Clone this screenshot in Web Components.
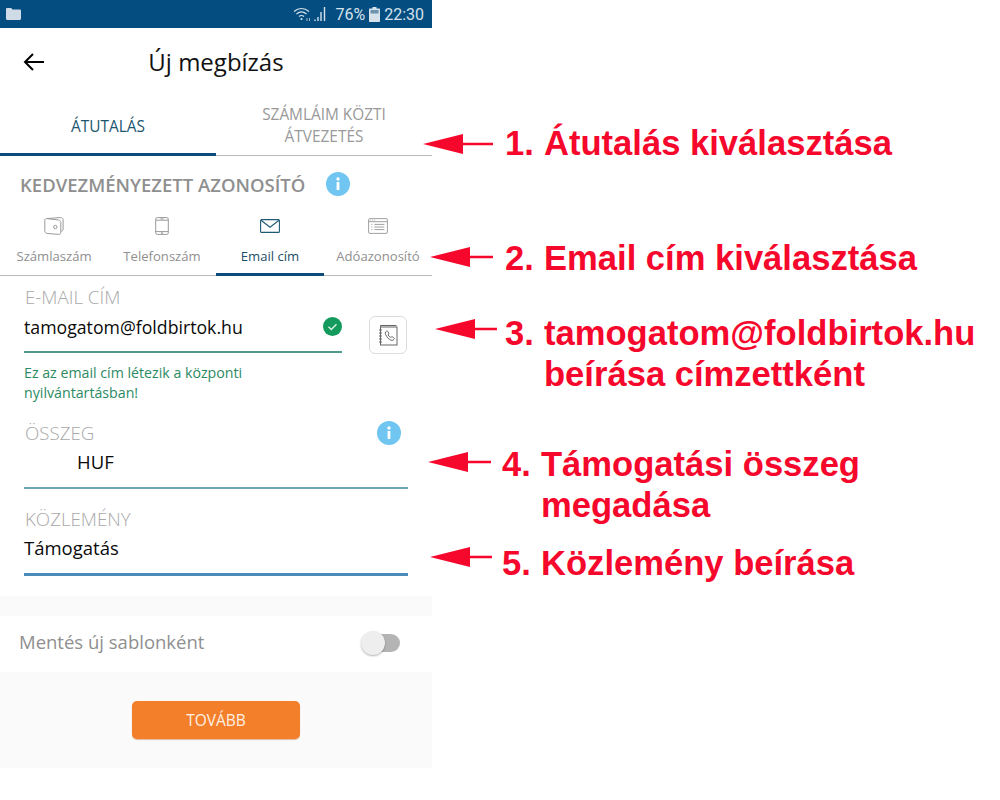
<!DOCTYPE html>
<html lang="hu">
<head>
<meta charset="utf-8">
<title>Új megbízás</title>
<style>
  html, body { margin: 0; background: #fff; }
  body { font-family: "Open Sans", "Liberation Sans", sans-serif; position: relative; height: 800px; overflow: hidden; }
</style>
</head>
<body>
<phone-screen>
  <status-bar></status-bar>
  <app-header title="Új megbízás"></app-header>
  <main-tabs></main-tabs>
  <section-title text="KEDVEZMÉNYEZETT AZONOSÍTÓ"></section-title>
  <id-tabs>
    <id-tab label="Számlaszám">
      <svg width="20" height="18" viewBox="0 0 20 18" fill="none" stroke="#9a9a9a" stroke-width="1"><path d="M3 1.5 16.5.6c1.3 0 2.6.8 2.6 2.2v9.4c0 1.2-.8 2-2 2.2"/><path d="M2.6 1.6 14.5 3c1.4.2 2.3 1.2 2.3 2.6v9.6c0 1.4-1 2.4-2.4 2.2L3 16.4c-1.2-.2-2.2-1.2-2.2-2.6V3.2c0-1 .8-1.7 1.8-1.6Z"/><circle cx="11.3" cy="10" r="1.7"/></svg>
    </id-tab>
    <id-tab label="Telefonszám">
      <svg width="14" height="18" viewBox="0 0 14 18" fill="none" stroke="#9a9a9a" stroke-width="1"><rect x=".7" y=".6" width="12.6" height="16.8" rx="1.6"/><path d="M.7 3.2h12.6M.7 14.6h12.6M5.5 1.9h3"/><circle cx="7" cy="16" r=".6"/></svg>
    </id-tab>
    <id-tab label="Email cím" active>
      <svg width="20" height="14" viewBox="0 0 20 14" fill="none" stroke="#1f5a75" stroke-width="1.1"><rect x=".6" y=".6" width="18.8" height="12.8" rx="1"/><path d="m1 1.2 9 7 9-7"/></svg>
    </id-tab>
    <id-tab label="Adóazonosító">
      <svg width="20" height="16" viewBox="0 0 20 16" fill="none" stroke="#a0a0a0" stroke-width="1"><rect x=".6" y=".6" width="18.8" height="14.8" rx="1.4"/><path d="M.6 3.7h18.8M2.4 2.2h.8M4.4 2.2h.8M6.4 2.2h.8M3.4 6.4h1M3.4 9h1M3.4 11.6h1M6.4 6.4h10M6.4 9h10M6.4 11.6h10"/></svg>
    </id-tab>
  </id-tabs>
  <payment-form>
    <div slot="email">
      <form-field label="E-MAIL CÍM" value="tamogatom@foldbirtok.hu" size="17.7" line="#4f9a8a" style="width:318px">
        <check-badge slot="trailing"></check-badge>
      </form-field>
    </div>
    <contact-button slot="contact"></contact-button>
    <span slot="help">Ez az email cím létezik a központi<br>nyilvántartásban!</span>
    <form-field slot="amount" label="ÖSSZEG" value="HUF" indent="53" pad="3" line="#6fa6b6">
      <info-icon slot="label-end"></info-icon>
    </form-field>
    <form-field slot="note" label="KÖZLEMÉNY" value="Támogatás" pad="3" line="#4a8cb9" thick></form-field>
  </payment-form>
  <save-row text="Mentés új sablonként"></save-row>
  <action-footer text="TOVÁBB"></action-footer>
</phone-screen>

<call-out x="423" y="144" len="70" tx="505" ty="123" num="1." text="Átutalás kiválasztása"></call-out>
<call-out x="430" y="257" len="63" tx="505" ty="238" num="2." text="Email cím kiválasztása"></call-out>
<call-out x="435" y="329" len="62" tx="505" ty="313" num="3." text="tamogatom@foldbirtok.hu|beírása címzettként"></call-out>
<call-out x="428" y="462" len="63" tx="502" ty="444" num="4." text="Támogatási összeg|megadása"></call-out>
<call-out x="430" y="557" len="62" tx="502" ty="543" num="5." text="Közlemény beírása"></call-out>

<script>
// small helper, every element just sets its shadow html once
class Base extends HTMLElement {
  connectedCallback() {
    if (!this.shadowRoot) this.attachShadow({ mode: 'open' });
    this.shadowRoot.innerHTML = this.render();
  }
  attr(name, def = '') { return this.getAttribute(name) ?? def; }
}

class PhoneScreen extends Base {
  render() {
    return `<style>
      :host { display: block; width: 432px; height: 768px; background: #fff; color: #000; }
    </style><slot></slot>`;
  }
}

class StatusBar extends Base {
  render() {
    return `<style>
      :host { display: flex; align-items: center; justify-content: space-between; box-sizing: border-box;
              height: 28px; padding: 0 8px 0 6px; background: #044d80; color: #d5e2ec;
              font: 16px Roboto, "Liberation Sans", sans-serif; }
      .right { display: flex; align-items: center; }
      .pct { font-size: 16px; margin: 0 4px 0 6px; }
      .bat { margin-right: 4px; }
      svg { display: block; }
    </style>
    <svg width="15" height="12" viewBox="0 0 15 12"><path d="M0 1.2C0 .5.5 0 1.2 0h4l1.3 1.6h7.3c.7 0 1.2.5 1.2 1.2v8c0 .7-.5 1.2-1.2 1.2H1.2C.5 12 0 11.500 0 10.800Z" fill="#cfdce7"/></svg>
    <div class="right">
      <svg width="36" height="16" viewBox="0 0 36 16" fill="none" stroke="#d5e2ec">
        <path d="M1 5.500C5.500 1.500 11.500 1.500 16 5.500M3.500 8C6.500 5.500 10.500 5.500 13.500 8M6 10.500c1.500-1.200 3.500-1.200 5 0" stroke-width="1.200"/>
        <circle cx="8.500" cy="13" r="1.100" fill="#d5e2ec" stroke="none"/>
        <path d="M14 15v-3M16.500 15v-3" stroke-width="1" opacity=".7"/>
        <path d="M22 15v-1.500M25 15v-4M28 15V6M31.500 15V1" stroke-width="1.400"/>
      </svg>
      <span class="pct">76%</span>
      <svg class="bat" width="11" height="15" viewBox="0 0 11 15"><path d="M3.500 0h4v1.500H10c.6 0 1 .4 1 1V14c0 .6-.4 1-1 1H1c-.6 0-1-.4-1-1V2.500c0-.6.4-1 1-1h2.500Z" fill="#d5e2ec"/><rect x="1.500" y="3" width="8" height="3.500" fill="#6f93ad"/></svg>
      <span>22:30</span>
    </div>`;
  }
}

class AppHeader extends Base {
  render() {
    return `<style>
      :host { display: grid; grid-template-columns: 1fr auto 1fr; align-items: center; height: 67px;
              font-size: 24px; color: #111; }
      svg { display: block; margin-left: 23px; }
    </style>
    <svg width="22" height="18" viewBox="0 0 22 18" fill="none" stroke="#000" stroke-width="2"><path d="M21 9H2M10 1 2 9l8 8"/></svg>
    <span>${this.attr('title')}</span>`;
  }
}

class MainTabs extends Base {
  render() {
    return `<style>
      :host { display: grid; grid-template-columns: 216px 216px; height: 61px; box-sizing: border-box;
              border-bottom: 1px solid #bbb; font-size: 15.400px; line-height: 22px; text-align: center; }
      div { display: flex; align-items: center; justify-content: center; color: #999; padding-top: 2px; }
      .on { color: #1d566f; padding-top: 3px; box-sizing: border-box; box-shadow: 0 1px 0 #0a4d7a, inset 0 -2px 0 #0a4d7a; }
    </style>
    <div class="on">ÁTUTALÁS</div>
    <div>SZÁMLÁIM KÖZTI<br>ÁTVEZETÉS</div>`;
  }
}

class SectionTitle extends Base {
  render() {
    return `<style>
      :host { display: flex; align-items: center; height: 56px; padding: 0 0 0 20px; box-sizing: border-box;
              color: #8f8f8f; font-size: 18.500px; font-weight: 600; }
      info-icon { margin-left: 21px; }
    </style>
    <span>${this.attr('text')}</span><info-icon></info-icon>`;
  }
}

class InfoIcon extends Base {
  render() {
    return `<style>:host { display: block; width: 24px; height: 24px; } svg { display: block; }</style>
    <svg width="24" height="24" viewBox="0 0 24 24"><circle cx="12" cy="12" r="12" fill="#70c6f1"/><rect x="10.600" y="10" width="2.800" height="8" rx=".6" fill="#fff"/><circle cx="12" cy="7" r="1.700" fill="#fff"/></svg>`;
  }
}

class IdTabs extends Base {
  render() {
    return `<style>
      :host { display: grid; grid-template-columns: repeat(4, 108px); height: 64px; box-sizing: border-box;
              border-bottom: 1px solid #bbb; }
    </style><slot></slot>`;
  }
}

class IdTab extends Base {
  render() {
    const on = this.hasAttribute('active');
    return `<style>
      :host { display: grid; grid-template-rows: 28px 1fr; justify-items: center; height: 64px; box-sizing: border-box;
              font-size: 13.100px; color: ${on ? '#1d4f68' : '#8f8f8f'};
              ${on ? 'border-bottom: 3px solid #0a4d7a;' : ''} }
      .ic { display: flex; align-items: center; justify-content: center; height: 28px; }
      span { line-height: 20px; margin-top: 6px; white-space: nowrap; }
    </style>
    <div class="ic"><slot></slot></div><span>${this.attr('label')}</span>`;
  }
}

class PaymentForm extends Base {
  render() {
    return `<style>
      :host { display: block; box-sizing: border-box; height: 320px; padding: 11px 24px 0; }
      .top { display: flex; align-items: flex-start; }
      .help { margin-top: 9px; font-size: 14.200px; line-height: 20px; color: #2c8a63; }
      .amt { display: block; margin-top: 20px; }
      .note { display: block; margin-top: 20px; }
    </style>
    <div class="top"><slot name="email"></slot><slot name="contact"></slot></div>
    <div class="help"><slot name="help"></slot></div>
    <div class="amt"><slot name="amount"></slot></div>
    <div class="note"><slot name="note"></slot></div>`;
  }
}

class FormField extends Base {
  render() {
    const thick = this.hasAttribute('thick');
    return `<style>
      :host { display: block; }
      .lab { display: flex; justify-content: space-between; align-items: flex-start; height: 22px; padding-left: 1px;
             font-size: 18.700px; font-weight: 300; line-height: 20px; color: #a8a8a8; }
      .val { display: flex; justify-content: space-between; box-sizing: border-box; height: ${thick ? 45 : 44}px;
             padding: ${this.attr('pad', '4')}px 0 0 ${this.attr('indent', '0')}px; font-size: ${this.attr('size', '18.500')}px; line-height: 28px; color: #0a0a0a;
             border-bottom: ${thick ? 3 : 2}px solid ${this.attr('line', '#999')}; }
      ::slotted([slot="label-end"]) { margin: -2px 7px 0 0; }
    </style>
    <div class="lab"><span>${this.attr('label')}</span><slot name="label-end"></slot></div>
    <div class="val"><span>${this.attr('value')}</span><slot name="trailing"></slot></div>`;
  }
}

class CheckBadge extends Base {
  render() {
    return `<style>:host { display: block; width: 19px; height: 19px; margin-top: 4px; } svg { display: block; }</style>
    <svg width="19" height="19" viewBox="0 0 19 19"><circle cx="9.500" cy="9.500" r="9.500" fill="#149a5c"/><path d="m5.500 9.800 2.800 2.700 5.200-5.300" fill="none" stroke="#d8f2e4" stroke-width="1.500"/></svg>`;
  }
}

class ContactButton extends Base {
  render() {
    return `<style>
      :host { display: flex; align-items: center; justify-content: center; box-sizing: border-box;
              width: 38px; height: 38px; margin: 29px 0 0 27px; border: 1px solid #dcdcdc; border-radius: 6px; }
      svg { display: block; }
    </style>
    <svg width="20" height="22" viewBox="0 0 20 22" fill="none" stroke="#666" stroke-width="1">
      <path d="M2.500 3V1.500h16"/><rect x="2.500" y="3" width="16.500" height="18"/>
      <path d="M1 6h3M1 9h3M1 12h3M1 15h3M1 18h3" stroke-width="1.200"/>
      <path d="M7.500 8c1-1.200 2-1.200 2.500-.2l.8 1.500c.2.600-.8 1-.6 1.700.4 1 1.300 1.900 2.300 2.300.7.200 1-.8 1.700-.6l1.500.9c.9.500 .7 1.700-.4 2.400-1.400.9-3.600-.1-5.400-1.900C8.100 12 6.800 9.500 7.500 8Z"/>
    </svg>`;
  }
}

class SaveRow extends Base {
  render() {
    return `<style>
      :host { display: flex; align-items: center; justify-content: space-between; box-sizing: border-box;
              height: 76px; padding: 20px 32px 0 19px; background: linear-gradient(#fafafa 20px, #fff 20px);
              font-size: 18.500px; color: #8f8f8f; }
      span { margin-bottom: 6px; }
      .sw { position: relative; width: 36px; height: 18px; border-radius: 9px; background: #b4b4b4; margin-bottom: 2px; }
      .sw i { position: absolute; left: -3px; top: -3px; width: 24px; height: 24px; border-radius: 50%;
              background: #eee; box-shadow: 0 1px 2px rgba(0,0,0,.3); }
    </style>
    <span>${this.attr('text')}</span><div class="sw"><i></i></div>`;
  }
}

class ActionFooter extends Base {
  render() {
    return `<style>
      :host { display: flex; justify-content: center; align-items: flex-start; box-sizing: border-box;
              height: 96px; padding-top: 29px; background: #fafafa; }
      button { width: 168px; height: 38px; border: 0; border-radius: 5px; background: #f47f2b; color: #fdf0e2;
               font: 15.500px "Open Sans", sans-serif; box-shadow: 0 1px 1px rgba(180,90,20,.4); }
    </style>
    <button>${this.attr('text')}</button>`;
  }
}

// red notes drawn over the screenshot, free placed on purpose
class CallOut extends Base {
  render() {
    const [x, y, len, tx, ty] = ['x', 'y', 'len', 'tx', 'ty'].map(n => +this.attr(n));
    const lines = this.attr('text').split('|');
    return `<style>
      :host { display: block; position: absolute; left: 0; top: 0; color: #f6072c;
              font: bold 34.600px/41px "Liberation Sans", Arial, sans-serif; }
      svg { position: absolute; left: ${x}px; top: ${y - 11}px; display: block; }
      .txt { position: absolute; left: ${tx}px; top: ${ty}px; display: grid; grid-template-columns: 39px auto; white-space: nowrap; }
    </style>
    <svg width="${len}" height="22" viewBox="0 0 ${len} 22"><path d="M0 11 40 1v8.700h${len - 40}v2.600H40V21Z" fill="#f6072c"/></svg>
    <div class="txt"><span>${this.attr('num')}</span><span>${lines.join('<br>')}</span></div>`;
  }
}

const tags = {
  'phone-screen': PhoneScreen, 'status-bar': StatusBar, 'app-header': AppHeader, 'main-tabs': MainTabs,
  'section-title': SectionTitle, 'info-icon': InfoIcon, 'id-tabs': IdTabs, 'id-tab': IdTab,
  'payment-form': PaymentForm, 'form-field': FormField, 'check-badge': CheckBadge, 'contact-button': ContactButton,
  'save-row': SaveRow, 'action-footer': ActionFooter, 'call-out': CallOut
};
for (const [tag, cls] of Object.entries(tags)) customElements.define(tag, cls);
</script>
</body>
</html>
